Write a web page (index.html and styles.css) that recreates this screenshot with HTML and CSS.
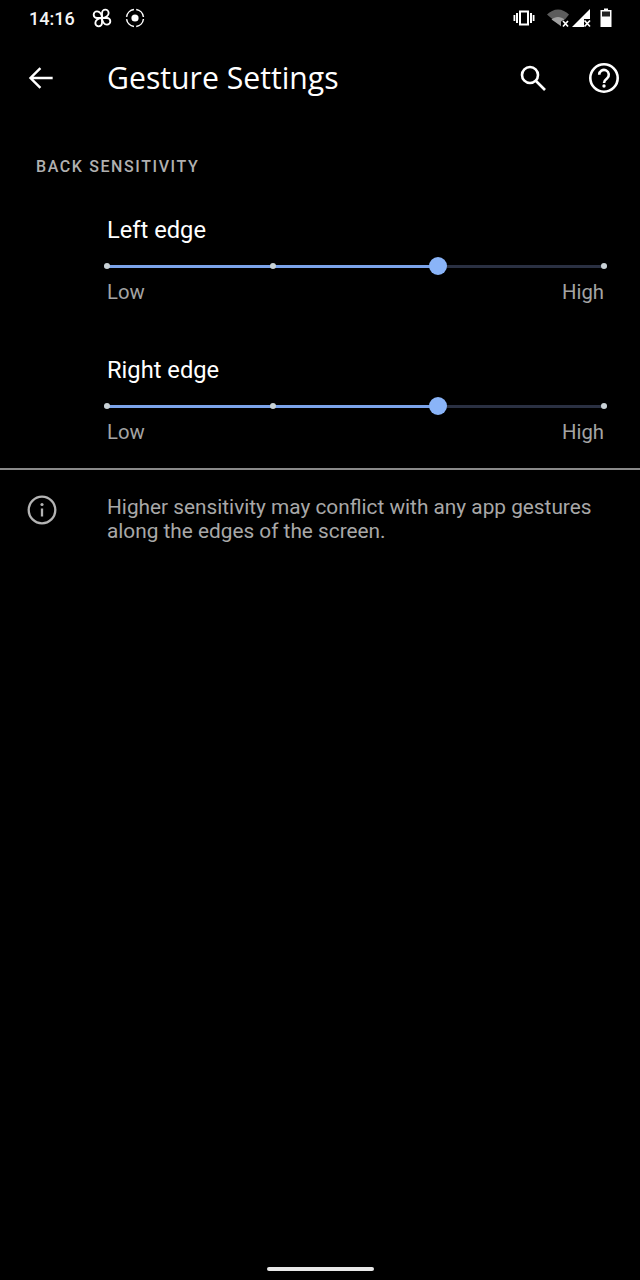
FILE: index.html
```html
<!DOCTYPE html>
<html lang="en">
<head>
  <meta charset="UTF-8" />
  <title>Gesture Settings</title>
  <link rel="stylesheet" href="styles.css">
</head>
<body>
  <div class="screen">
    <!-- Status bar -->
    <div class="status">
      <span class="time">14:16</span>
      <svg class="st-ic" viewBox="0 0 24 24" width="20" height="20" fill="none" stroke="#fff" stroke-width="2.200">
        <path d="M12 12V6a4 4 0 0 1 8 0c0 3.300-3.500 6-8 6z"/>
        <path d="M12 12V6a4 4 0 0 1 8 0c0 3.300-3.500 6-8 6z" transform="rotate(90 12 12)"/>
        <path d="M12 12V6a4 4 0 0 1 8 0c0 3.300-3.500 6-8 6z" transform="rotate(180 12 12)"/>
        <path d="M12 12V6a4 4 0 0 1 8 0c0 3.300-3.500 6-8 6z" transform="rotate(270 12 12)"/>
      </svg>
      <svg class="st-ic rec" viewBox="0 0 22 22" width="22" height="22" fill="none" stroke="#fff" stroke-width="1.500">
        <circle cx="11" cy="11" r="8.500" stroke-dasharray="11 2.350" stroke-dashoffset="-1"/>
        <circle cx="11" cy="11" r="3.600" fill="#fff" stroke="none"/>
      </svg>
      <span class="spacer"></span>
      <svg class="st-r vib" viewBox="0 0 22 18" width="22" height="18" fill="#fff">
        <path d="M6 1.500h10v15H6zM8 3.500v11h6v-11z" fill-rule="evenodd"/>
        <rect x="3" y="4" width="2" height="10"/><rect x="17" y="4" width="2" height="10"/>
        <rect x="0.500" y="6" width="1.800" height="6"/><rect x="19.700" y="6" width="1.800" height="6"/>
      </svg>
      <svg class="st-r wifi" viewBox="0 0 24 20" width="24" height="20">
        <path d="M1 6.500C4 3.500 8 1.500 12 1.500s8 2 11 5l-4 5h-4v7z" fill="#5c5c5c"/>
        <path d="M5.500 11.500c3.500-3.500 9.500-3.500 13 0l-3.500 2v4.500z" fill="#a0a0a0"/>
        <path d="M17 13l5 5.500M22 13l-5 5.500" stroke="#fff" stroke-width="1.700"/>
      </svg>
      <svg class="st-r sig" viewBox="0 0 20 20" width="20" height="20">
        <path d="M1 19L19 1v10h-6v8z" fill="#fff"/>
        <path d="M13.500 12.500l5.500 6M19 12.500l-5.500 6" stroke="#fff" stroke-width="1.700"/>
      </svg>
      <svg class="st-r bat" viewBox="0 0 12 20" width="12" height="20">
        <path d="M4 0.500h4v1.500h3.500v17H.500V2H4z" fill="#fff"/>
        <rect x="2" y="3.500" width="8" height="5" fill="#222"/>
      </svg>
    </div>

    <!-- Toolbar -->
    <header class="toolbar">
      <svg class="back" viewBox="0 0 24 24" width="28" height="28" fill="none" stroke="#fff" stroke-width="2.100">
        <path d="M22 12H3M11.500 3.500L3 12l8.500 8.500"/>
      </svg>
      <h1>Gesture Settings</h1>
      <svg class="search" viewBox="0 0 28 28" width="28" height="28" fill="none" stroke="#fff" stroke-width="2.600">
        <circle cx="11" cy="11" r="8"/>
        <path d="M17 17l9 9"/>
      </svg>
      <svg class="help" viewBox="0 0 32 32" width="32" height="32" fill="none" stroke="#fff" stroke-width="2.600">
        <circle cx="16" cy="16" r="13.700"/>
        <path d="M11.200 12.800a4.800 4.800 0 1 1 7.800 3.700c-1.800 1.400-3 2.300-3 4.500"/>
        <circle cx="16" cy="24" r="1.700" fill="#fff" stroke="none"/>
      </svg>
    </header>

    <main>
      <h2 class="section">BACK SENSITIVITY</h2>

      <section class="edge">
        <div class="edge-name">Left edge</div>
        <div class="slider">
          <div class="fill"></div>
          <i class="tick"></i><i class="tick"></i><i class="tick"></i><i class="tick"></i>
          <div class="thumb"></div>
        </div>
        <div class="ends"><span>Low</span><span>High</span></div>
      </section>

      <section class="edge">
        <div class="edge-name">Right edge</div>
        <div class="slider">
          <div class="fill"></div>
          <i class="tick"></i><i class="tick"></i><i class="tick"></i><i class="tick"></i>
          <div class="thumb"></div>
        </div>
        <div class="ends"><span>Low</span><span>High</span></div>
      </section>

      <div class="note">
        <svg class="info" viewBox="0 0 30 30" width="30" height="30" fill="none" stroke="#b4b4b4" stroke-width="2.300">
          <circle cx="15" cy="15" r="13.300"/>
          <path d="M15 13.500v8"/>
          <circle cx="15" cy="9.500" r="1.600" fill="#b4b4b4" stroke="none"/>
        </svg>
        <p>Higher sensitivity may conflict with any app gestures along the edges of the screen.</p>
      </div>
    </main>

    <div class="nav-pill"></div>
  </div>
</body>
</html>
```

FILE: styles.css
```css
* { box-sizing: border-box; margin: 0; padding: 0; }
html, body { background: #000; }
body {
  width: 640px;
  height: 1280px;
  overflow: hidden;
  font-family: Roboto, sans-serif;
  color: #fff;
}
.screen {
  height: 1280px;
  display: flex;
  flex-direction: column;
}
svg { display: block; flex: none; }

.status {
  display: flex;
  align-items: center;
  height: 36px;
  padding: 0 28px 0 29px;
}
.time { font-size: 18px; font-weight: 500; color: #f4f4f4; width: 46px; }
.st-ic { margin-left: 17px; }
.rec { margin-left: 12px; }
.spacer { flex: 1; }
.st-r { margin-left: 11px; }
.sig { margin-left: 1px; }
.bat { margin-left: 9px; }

.toolbar {
  display: flex;
  align-items: center;
  height: 83px;
  padding: 0 20px 0 27px;
}
.toolbar h1 {
  font-size: 30.200px;
  font-weight: 500;
  font-family: "Open Sans", sans-serif;
  margin-left: 52px;
  flex: 1;
  white-space: nowrap;
}
.search { margin-right: 41px; }

.section {
  font-size: 16px;
  font-weight: 500;
  letter-spacing: 1.600px;
  color: #b0b0b0;
  padding: 38px 0 0 36px;
  line-height: 20px;
}

.edge {
  padding: 0 36px 0 107px;
  margin-top: 38px;
}
.edge + .edge { margin-top: 50px; }
.edge-name { font-size: 23.700px; line-height: 30px; color: #fff; }
.slider {
  position: relative;
  margin-top: 18px;
  height: 6px;
  display: flex;
  justify-content: space-between;
  align-items: center;
  background: linear-gradient(#2a3042, #2a3042) center / 100% 3px no-repeat;
  margin-left: -3px;
  margin-right: -3px;
}
.fill {
  position: absolute;
  left: 3px;
  top: 1.500px;
  width: 66%;
  height: 3px;
  background: #7ba3ea;
}
.tick {
  position: relative;
  width: 6px;
  height: 6px;
  border-radius: 50%;
  background: #c9d2d6;
}
.thumb {
  position: absolute;
  left: calc(66.600% - 10px);
  top: -6px;
  width: 18px;
  height: 18px;
  border-radius: 50%;
  background: #8ab4f8;
}
.ends {
  display: flex;
  justify-content: space-between;
  font-size: 20.300px;
  line-height: 26px;
  color: #a4a4a4;
  margin-top: 10px;
}

.note {
  display: flex;
  align-items: flex-start;
  margin-top: 23px;
  border-top: 2px solid #8a8a8a;
  padding: 25px 36px 0 27px;
}
.note p {
  font-size: 20.800px;
  line-height: 24px;
  color: #a8a8a8;
  margin-left: 50px;
}
.nav-pill {
  width: 107px;
  height: 4px;
  border-radius: 2px;
  background: #e8e8e8;
  margin: auto auto 9px;
}
```
